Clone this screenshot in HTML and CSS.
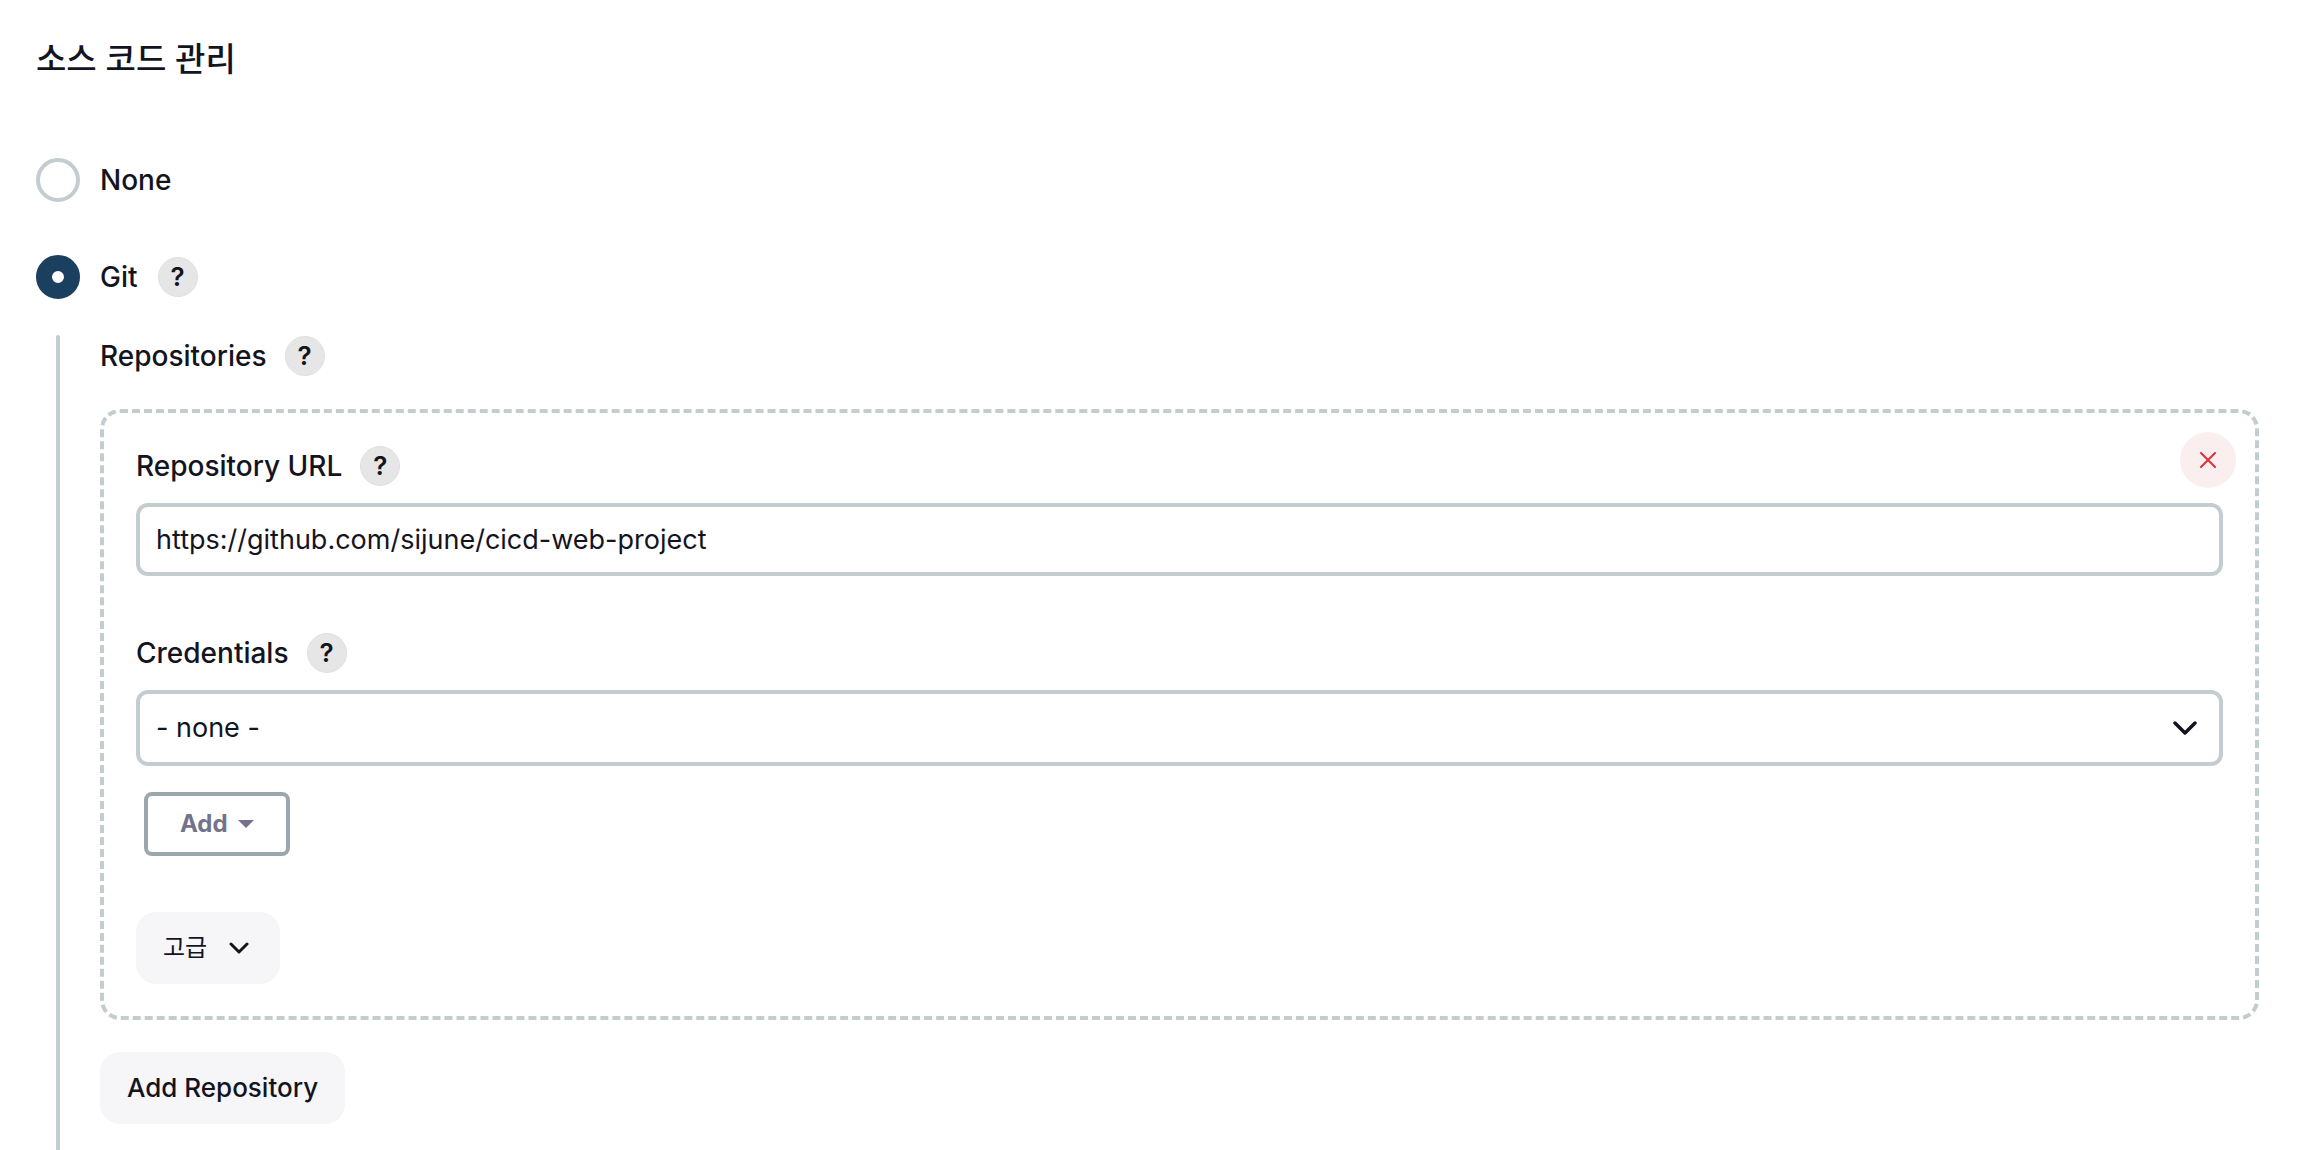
FILE: index.html
```html
<!DOCTYPE html>
<html lang="ko">
<head>
    <meta charset="UTF-8">
    <meta name="viewport" content="width=device-width, initial-scale=1.0">
    <title>소스 코드 관리</title>
    <link rel="stylesheet" href="styles.css">
</head>
<body>
    <form class="config">
      <h2 class="config-title">소스 코드 관리</h2>

      <div class="radio-row">
        <input type="radio" name="scm" id="scm-none">
        <label for="scm-none">None</label>
      </div>
      <div class="radio-row">
        <input type="radio" name="scm" id="scm-git" checked>
        <label for="scm-git">Git</label>
        <button type="button" class="help">?</button>
      </div>

      <div class="nested">
        <div class="nested-body">
          <div class="label-row">
            <span>Repositories</span>
            <button type="button" class="help">?</button>
          </div>

          <div class="repo">
            <button type="button" class="delete" aria-label="Delete">
              <svg width="16" height="16" viewBox="0 0 16 16"><path d="M1 1l14 14M15 1L1 15"/></svg>
            </button>

            <div class="label-row">
              <label for="repo-url">Repository URL</label>
              <button type="button" class="help">?</button>
            </div>
            <input type="text" class="field" id="repo-url" value="https://github.com/sijune/cicd-web-project">

            <div class="label-row credentials">
              <label for="credentials">Credentials</label>
              <button type="button" class="help">?</button>
            </div>
            <div class="select">
              <select class="field" id="credentials">
                <option>- none -</option>
              </select>
              <svg class="select-arrow" width="24" height="14" viewBox="0 0 24 14"><path d="M2 2l10 10L22 2"/></svg>
            </div>

            <button type="button" class="add">
              Add
              <svg width="16" height="8" viewBox="0 0 16 8"><path d="M0 0h16L8 8z"/></svg>
            </button>

            <button type="button" class="btn advanced">
              고급
              <svg width="20" height="12" viewBox="0 0 20 12"><path d="M2 2l8 8 8-8"/></svg>
            </button>
          </div>

          <button type="button" class="btn">Add Repository</button>
        </div>
      </div>
    </form>
</body>
</html>
```
FILE: styles.css
```css
* {
  box-sizing: border-box;
}

body {
  margin: 0;
  background: #fff;
  color: #14141f;
  font-family: Inter, "Noto Sans CJK KR", sans-serif;
  font-size: 28px;
  line-height: 40px;
}

button,
input,
select {
  margin: 0;
  color: inherit;
  font: inherit;
}

.config {
  display: flex;
  flex-direction: column;
  min-height: 100vh;
  padding: 39px 49px 0 36px;
}

.config-title {
  margin: 0 0 79px;
  font-size: 33px;
  font-weight: 500;
}

.radio-row,
.label-row {
  display: flex;
  align-items: center;
  gap: 18px;
  font-weight: 500;
}

.radio-row {
  gap: 20px;
  height: 44px;
  margin-bottom: 53px;
}

.radio-row + .radio-row {
  margin-bottom: 36px;
}

.radio-row input {
  appearance: none;
  width: 44px;
  height: 44px;
  border: 4px solid #c3cccf;
  border-radius: 50%;
}

.radio-row input:checked {
  border: 16px solid #1a3f5f;
}

.help {
  width: 40px;
  height: 40px;
  padding: 0;
  border: 1px solid #e0e0e0;
  border-radius: 50%;
  background: #e6e6e6;
  font-size: 26px;
  font-weight: 600;
  line-height: 38px;
}

/* vertical line next to the git settings */
.nested {
  display: flex;
  flex: 1;
  gap: 40px;
  padding-left: 20px;
}

.nested:before {
  content: "";
  width: 4px;
  border-radius: 4px 4px 0 0;
  background: #c3cccf;
}

.nested-body {
  flex: 1;
  padding: 1px 0 25px;
}

.repo {
  position: relative;
  margin: 33px 0 32px;
  padding: 33px 32px 32px;
  border: 4px dashed #c3cccf;
  border-radius: 20px;
}

.delete {
  display: flex;
  align-items: center;
  justify-content: center;
  position: absolute;
  top: 19px;
  right: 19px;
  width: 56px;
  height: 56px;
  padding: 0;
  border: 0;
  border-radius: 50%;
  background: #fbeeef;
}

svg {
  fill: none;
  stroke: currentColor;
  stroke-linecap: round;
  stroke-linejoin: round;
}

.delete svg {
  stroke: #d8343a;
  stroke-width: 2;
}

.field {
  display: block;
  width: 100%;
  padding: 0 16px;
  border: 4px solid #c3cccf;
  border-radius: 12px;
  background: #fff;
  font-size: 27px;
}

input.field {
  height: 73px;
  margin-top: 17px;
}

.credentials {
  margin-top: 57px;
}

.select {
  position: relative;
  margin-top: 17px;
}

.select .field {
  appearance: none;
  height: 76px;
}

.select-arrow {
  position: absolute;
  top: 31px;
  right: 26px;
  stroke-width: 3.5;
  pointer-events: none;
}

.add {
  display: flex;
  align-items: center;
  gap: 10px;
  height: 64px;
  margin: 26px 8px 56px;
  padding: 0 32px;
  border: 4px solid #9ba7ad;
  border-radius: 8px;
  background: #fff;
  color: #73738c;
  font-size: 24px;
  font-weight: 700;
}

.add svg {
  fill: currentColor;
  stroke: none;
}

.btn {
  display: flex;
  align-items: center;
  gap: 22px;
  height: 72px;
  padding: 0 27px;
  border: 0;
  border-radius: 20px;
  background: #f6f6f9;
  font-size: 26px;
  font-weight: 500;
}

.advanced {
  padding-right: 31px;
  font-size: 24px;
  font-weight: 400;
}

.btn svg {
  stroke-width: 3;
}
```
